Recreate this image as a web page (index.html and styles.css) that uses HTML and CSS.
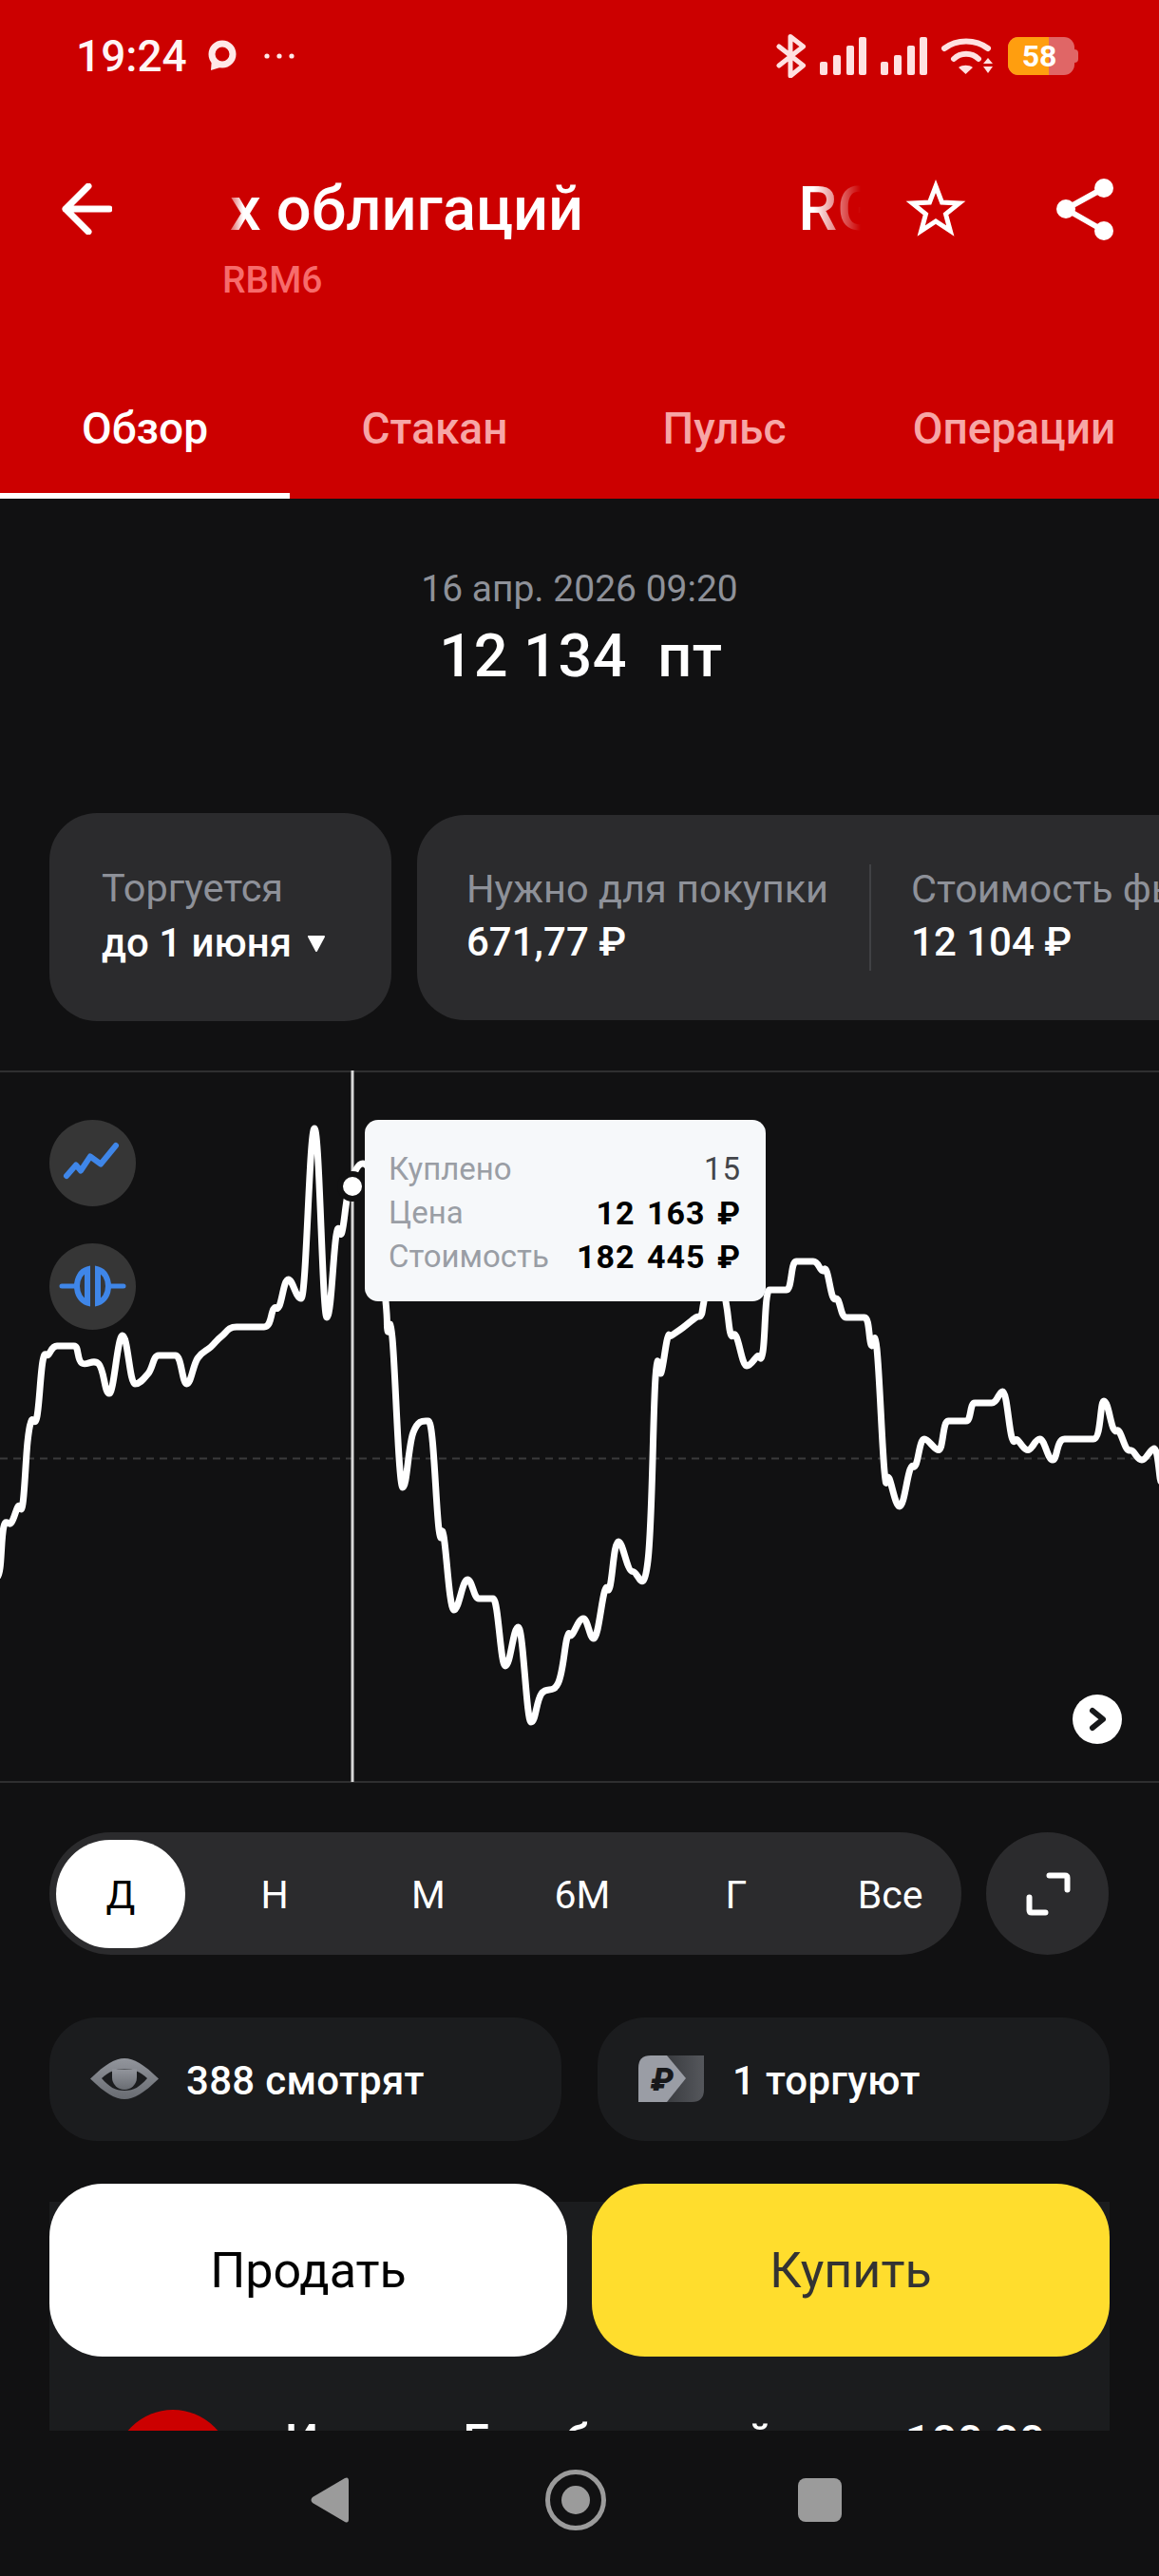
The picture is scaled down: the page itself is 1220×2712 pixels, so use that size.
FILE: index.html
```html
<!DOCTYPE html>
<html lang="ru">
<head>
<meta charset="utf-8">
<title>RBM6</title>
<link rel="stylesheet" href="styles.css">
</head>
<body>
<div class="page">
  <header class="header">
    <div class="status">
      <div class="status-left">
        <span class="time">19:24</span>
        <svg class="st-msg" width="34" height="36" viewBox="0 0 34 36"><circle cx="17" cy="16" r="11" fill="none" stroke="#ffe8e8" stroke-width="7"/><path d="M6 20 L5 33 L18 29 Z" fill="#ffe8e8"/></svg>
        <svg class="st-dots" width="34" height="8" viewBox="0 0 34 8"><circle cx="4" cy="4" r="2.6" fill="#ffe8e8"/><circle cx="17" cy="4" r="2.6" fill="#ffe8e8"/><circle cx="30" cy="4" r="2.6" fill="#ffe8e8"/></svg>
      </div>
      <div class="status-right">
        <svg width="31" height="46" viewBox="0 0 31 46"><path d="M3 13 L28.5 33 L15 44 V2.500 L28.500 13 L3 33" fill="none" stroke="#ffe1e1" stroke-width="5" stroke-linejoin="round" stroke-linecap="round"/></svg>
        <svg width="49" height="40" viewBox="0 0 49 40"><rect x="0" y="26" width="8" height="14" rx="2" fill="#ffe1e1"/><rect x="14" y="19" width="8" height="21" rx="2" fill="#ffe1e1"/><rect x="28" y="9" width="8" height="31" rx="2" fill="#ffe1e1"/><rect x="41" y="0" width="8" height="40" rx="2" fill="#ffe1e1"/></svg>
        <svg width="49" height="40" viewBox="0 0 49 40"><rect x="0" y="26" width="8" height="14" rx="2" fill="#ffe1e1"/><rect x="14" y="19" width="8" height="21" rx="2" fill="#ffe1e1"/><rect x="28" y="9" width="8" height="31" rx="2" fill="#ffe1e1"/><rect x="41" y="0" width="8" height="40" rx="2" fill="#ffe1e1"/></svg>
        <svg width="55" height="40" viewBox="0 0 55 40"><path d="M3 12 C16 2 36 2 49 12" fill="none" stroke="#ffe1e1" stroke-width="6" stroke-linecap="round"/><path d="M13 23 C20 16 32 16 39 23" fill="none" stroke="#ffe1e1" stroke-width="6" stroke-linecap="round"/><path d="M18 32 C22 29 29 29 33 32 L25.500 39 Z" fill="#ffe1e1"/><path d="M44 28 L49 22 L54 28 Z M44 31 H54 L49 38 Z" fill="#ffe1e1"/></svg>
        <div class="battery"><div class="battery-body"><div class="battery-fill"></div><span class="battery-num">58</span></div><div class="battery-nub"></div></div>
      </div>
    </div>
    <div class="titlebar">
      <div class="iconbox back"><svg width="54" height="54" viewBox="0 0 54 54"><path d="M51 27 H5 M29 3 L5 27 L29 51" fill="none" stroke="#fff" stroke-width="7" stroke-linecap="round" stroke-linejoin="round"/></svg></div>
      <div class="titles">
        <div class="marquee"><span>х облигаций</span><span>RGBI</span></div>
        <div class="ticker">RBM6</div>
      </div>
      <div class="iconbox star"><svg width="70" height="70" viewBox="0 0 70 70"><path d="M35 11 L41.500 28.100 L59.700 29 L45.500 40.400 L50.300 58 L35 48 L19.700 58 L24.500 40.400 L10.300 29 L28.500 28.100 Z" fill="none" stroke="#fff" stroke-width="5"/></svg></div>
      <div class="iconbox share"><svg width="64" height="70" viewBox="0 0 64 70"><path d="M52 13 L12 35 L52 58" fill="none" stroke="#fff" stroke-width="6"/><circle cx="52" cy="13" r="10" fill="#fff"/><circle cx="12" cy="35" r="10" fill="#fff"/><circle cx="52" cy="58" r="10" fill="#fff"/></svg></div>
    </div>
    <nav class="tabs">
      <div class="tab tab-active">Обзор</div>
      <div class="tab">Стакан</div>
      <div class="tab">Пульс</div>
      <div class="tab">Операции</div>
    </nav>
  </header>

  <main class="main">
    <section class="quote">
      <div class="quote-date">16 апр. 2026 09:20</div>
      <div class="quote-price">12 134 &nbsp;пт</div>
    </section>

    <section class="cards">
      <div class="card card-expiry">
        <div class="label">Торгуется</div>
        <div class="value">до 1 июня<svg class="caret" width="20" height="18" viewBox="0 0 20 18"><path d="M2 2 H18 L10 17 Z" fill="#fff" stroke="#fff" stroke-width="2" stroke-linejoin="round"/></svg></div>
      </div>
      <div class="card card-info">
        <div class="info-item">
          <div class="label">Нужно для покупки</div>
          <div class="value">671,77 ₽</div>
        </div>
        <div class="info-divider"></div>
        <div class="info-item">
          <div class="label">Стоимость фьючерса</div>
          <div class="value">12 104 ₽</div>
        </div>
      </div>
    </section>

    <section class="chart">
      <svg class="chart-svg" viewBox="0 1127 1220 750" width="1220" height="750">
        <line x1="0" y1="1535.500" x2="1220" y2="1535.500" stroke="#3a3a3b" stroke-width="2" stroke-dasharray="8 6"/>
        <line x1="371" y1="1127" x2="371" y2="1876" stroke="#d8d8d8" stroke-width="3"/>
        <path id="price-line" d="" fill="none" stroke="#fff" stroke-width="7" stroke-linejoin="round" stroke-linecap="round"/>
        <circle cx="371" cy="1249" r="13" fill="#fff" stroke="#111112" stroke-width="6"/>
      </svg>
      <div class="chart-tool chart-tool-line"><svg width="91" height="91" viewBox="0 0 91 91"><path d="M18 59 L28 47.500 L33 53.500 L43 38.500 L54 46.500 L70 27" fill="none" stroke="#3f86e8" stroke-width="6" stroke-linecap="round" stroke-linejoin="round"/></svg></div>
      <div class="chart-tool chart-tool-orders"><svg width="91" height="91" viewBox="0 0 91 91"><path d="M13 45 H27 M64 45 H78" stroke="#3f86e8" stroke-width="5" stroke-linecap="round"/><path d="M40 27.500 V62.500 C33 60.500 29 53 29 45 C29 37 33 29.500 40 27.500 Z M51 27.500 V62.500 C58 60.500 62 53 62 45 C62 37 58 29.500 51 27.500 Z" fill="none" stroke="#3f86e8" stroke-width="6"/></svg></div>
      <div class="tooltip">
        <div class="tt-row"><span class="tt-label">Куплено</span><span class="tt-count">15</span></div>
        <div class="tt-row"><span class="tt-label">Цена</span><span class="tt-value">12 163 ₽</span></div>
        <div class="tt-row"><span class="tt-label">Стоимость</span><span class="tt-value">182 445 ₽</span></div>
      </div>
      <div class="chart-next"><svg width="52" height="52" viewBox="0 0 52 52"><path d="M21 17 L32 26 L21 35" fill="none" stroke="#17181a" stroke-width="6" stroke-linecap="round" stroke-linejoin="round"/></svg></div>
    </section>

    <section class="range-row">
      <div class="periods">
        <div class="period period-active">Д</div>
        <div class="period">Н</div>
        <div class="period">М</div>
        <div class="period">6М</div>
        <div class="period">Г</div>
        <div class="period">Все</div>
      </div>
      <div class="expand"><svg width="52" height="52" viewBox="0 0 52 52"><path d="M27.500 6.500 H44 Q46.500 6.500 46.500 9 V21.500 M23.500 45.500 H9 Q6.500 45.500 6.500 43 V29.500" fill="none" stroke="#fff" stroke-width="6" stroke-linecap="round"/></svg></div>
    </section>

    <section class="chips">
      <div class="chip">
        <svg width="72" height="44" viewBox="0 0 72 44">
          <defs><linearGradient id="eye-g" x1="0" y1="0" x2="0" y2="1"><stop offset="0" stop-color="#92959c"/><stop offset="1" stop-color="#696c72"/></linearGradient></defs>
          <path d="M0 21.500 C16 6 26 0 36 0 C46 0 56 6 72 21.500 C56 37 46 43 36 43 C26 43 16 37 0 21.500 Z" fill="url(#eye-g)"/>
          <path d="M12 21 C20 14 26 11 36 11 C46 11 52 14 60 21 C52 30 46 34 36 34 C26 34 20 30 12 21 Z" fill="#1b1c1e"/>
          <path d="M23 11.500 H49 V20 A13 13 0 0 1 23 20 Z" fill="url(#eye-g)"/>
        </svg>
        <span class="chip-text">388 смотрят</span>
      </div>
      <div class="chip">
        <svg width="70" height="50" viewBox="0 0 70 50">
          <defs><linearGradient id="rub-g" x1="0" y1="0" x2="1" y2="0"><stop offset="0" stop-color="#3a3c40"/><stop offset="1" stop-color="#55575c"/></linearGradient></defs>
          <path d="M30 0 H69 V36 Q69 49 56 49 H30 Z" fill="url(#rub-g)"/>
          <path d="M13 0 H30 L50 24 L30 49 H0 V13 Q0 0 13 0 Z" fill="#9a9da5"/>
          <text class="rub-mark" x="25" y="37" text-anchor="middle">₽</text>
        </svg>
        <span class="chip-text">1 торгуют</span>
      </div>
    </section>

    <section class="holding">
      <div class="holding-logo"></div>
      <div class="holding-name">Индекс Гособлигаций</div>
      <div class="holding-price">100,00</div>
    </section>

    <div class="actions">
      <button class="action action-sell">Продать</button>
      <button class="action action-buy">Купить</button>
    </div>
  </main>

  <footer class="navbar">
    <svg width="44" height="54" viewBox="0 0 44 54"><path d="M38 4 Q42 2 42 7 V47 Q42 52 38 50 L4 30 Q1 27 4 24 Z" fill="#9b9b9b"/></svg>
    <svg class="nav-home" width="64" height="64" viewBox="0 0 64 64"><circle cx="32" cy="32" r="29.500" fill="none" stroke="#9b9b9b" stroke-width="5"/><circle cx="32" cy="32" r="15" fill="#9b9b9b"/></svg>
    <div class="nav-square"></div>
  </footer>
</div>
<script src="chart.js"></script>
</body>
</html>
```

FILE: styles.css
```css
* { box-sizing: border-box; }
html, body { margin: 0; padding: 0; background: #111112; }
body { font-family: Roboto, "Noto Sans", "DejaVu Sans", sans-serif; color: #fff; }
.page { width: 1220px; height: 2712px; display: flex; flex-direction: column; overflow: hidden; background: #111112; }

.header { height: 525px; background: #cc0000; display: flex; flex-direction: column; flex: none; }
.status { height: 58px; margin-top: 30px; padding: 0 85px 0 80px; display: flex; justify-content: space-between; align-items: center; }
.status-left { display: flex; align-items: center; }
.time { font-size: 46px; font-weight: 500; line-height: 58px; color: #fff5f5; }
.st-msg { margin-left: 20px; }
.st-dots { margin-left: 26px; }
.status-right { display: flex; align-items: center; gap: 15px; }
.battery { display: flex; align-items: center; }
.battery-body { position: relative; width: 70px; height: 40px; border-radius: 11px; background: #e06666; overflow: hidden; display: flex; align-items: center; justify-content: center; }
.battery-fill { position: absolute; left: 0; top: 0; bottom: 0; width: 43px; background: #ff9e0f; }
.battery-num { position: relative; font-size: 32px; font-weight: 700; color: #fff; line-height: 40px; margin-left: -4px; }
.battery-nub { width: 4px; height: 14px; border-radius: 0 4px 4px 0; background: #e06666; }

.titlebar { height: 133px; margin-top: 96px; display: flex; align-items: flex-start; flex: none; }
.iconbox { height: 72px; display: flex; align-items: center; flex: none; }
.back { margin-left: 64px; width: 54px; }
.titles { margin-left: 116px; width: 672px; flex: none; }
.marquee { height: 72px; display: flex; gap: 226px; white-space: nowrap; overflow: hidden; font-size: 65px; font-weight: 500; line-height: 72px; padding-left: 8px; -webkit-mask-image: linear-gradient(90deg, transparent 0, #000 22px, #000 calc(100% - 50px), transparent 100%); mask-image: linear-gradient(90deg, transparent 0, #000 22px, #000 calc(100% - 50px), transparent 100%); }
.marquee span { flex: none; }
.ticker { margin-top: 17px; font-size: 39px; line-height: 44px; font-weight: 500; color: #f76b6b; }
.star { margin-left: 44px; width: 70px; }
.share { margin-left: 90px; width: 64px; }

.tabs { margin-top: auto; display: flex; }
.tab { flex: 1; height: 142px; display: flex; align-items: center; justify-content: center; font-size: 46px; font-weight: 500; color: #f7a6a6; border-bottom: 6px solid transparent; }
.tab-active { color: #fff; border-bottom-color: #fff; }

.main { position: relative; height: 2034px; flex: none; overflow: hidden; }
.quote { padding-top: 70px; text-align: center; }
.quote-date { font-size: 39px; line-height: 50px; color: #8e9199; }
.quote-price { margin-top: 10px; padding-left: 3px; font-size: 63px; font-weight: 500; line-height: 72px; letter-spacing: 0.5px; }

.cards { margin-top: 129px; padding-left: 52px; display: flex; align-items: center; gap: 27px; height: 219px; overflow: hidden; }
.card { background: #2b2b2d; border-radius: 50px; flex: none; display: flex; }
.card-expiry { width: 360px; height: 219px; padding: 0 0 3px 55px; flex-direction: column; justify-content: center; gap: 8px; }
.card-info { height: 216px; padding: 0 0 0 52px; align-items: center; }
.label { font-size: 41.5px; line-height: 50px; color: #8e9199; white-space: nowrap; }
.value { font-size: 42px; line-height: 50px; font-weight: 500; color: #fff; white-space: nowrap; display: flex; align-items: center; }
.caret { margin-left: 16px; }
.info-item { display: flex; flex-direction: column; gap: 6px; padding-bottom: 3px; }
.info-divider { width: 2px; height: 112px; background: #404144; margin: 0 42px 0 43px; }

.chart { position: relative; margin-top: 52px; height: 750px; border-top: 2px solid #2f2f30; border-bottom: 2px solid #2f2f30; }
.chart-svg { position: absolute; left: 0; top: -2px; display: block; }
.chart-tool { position: absolute; left: 52px; width: 91px; height: 91px; border-radius: 50%; background: #363636; }
.chart-tool svg { display: block; }
.chart-tool-line { top: 50px; }
.chart-tool-orders { top: 180px; }
.tooltip { position: absolute; left: 384px; top: 50px; width: 422px; height: 191px; border-radius: 14px; background: #f6f8fa; padding: 4px 26px 0 25px; display: flex; flex-direction: column; justify-content: center; }
.tt-row { display: flex; justify-content: space-between; line-height: 46px; font-size: 33px; white-space: nowrap; }
.tt-label { color: #9a9ea5; }
.tt-count { color: #44464a; letter-spacing: 1px; }
.tt-value { color: #000; font-weight: 700; font-size: 34px; letter-spacing: 1px; word-spacing: 3px; }
.chart-next { position: absolute; left: 1129px; top: 655px; width: 52px; height: 52px; border-radius: 50%; background: #fff; }
.chart-next svg { display: block; }

.range-row { margin-top: 52px; padding: 0 53px 0 52px; display: flex; gap: 26px; }
.periods { width: 960px; height: 129px; padding: 8px 7px; border-radius: 65px; background: #2b2b2d; display: flex; gap: 26px; }
.period { width: 136px; height: 114px; border-radius: 57px; display: flex; align-items: center; justify-content: center; font-size: 41px; padding-top: 2px; color: #fff; }
.period-active { background: #fff; color: #000; }
.expand { width: 129px; height: 129px; border-radius: 50%; background: #2b2b2d; display: flex; align-items: center; justify-content: center; }

.chips { margin-top: 66px; padding: 0 52px; display: flex; gap: 38px; }
.chip { flex: 1; height: 130px; border-radius: 50px; background: #1b1c1e; padding-left: 43px; display: flex; align-items: center; gap: 29px; }
.chip-text { font-size: 42px; font-weight: 500; line-height: 50px; color: #fff; letter-spacing: 0.3px; padding-top: 4px; }
.rub-mark { font-size: 34px; font-weight: 900; fill: #17181a; font-style: italic; }

.holding { margin: 64px 52px 0; height: 400px; background: #1b1c1e; padding: 217px 68px 0 68px; display: flex; align-items: flex-start; }
.holding-logo { width: 124px; height: 124px; border-radius: 50%; background: #cc0000; margin-top: 2px; flex: none; }
.holding-name { margin-left: 56px; font-size: 50px; font-weight: 500; line-height: 72px; white-space: nowrap; flex: 1; }
.holding-price { font-size: 48px; font-weight: 500; line-height: 72px; }

.actions { position: absolute; left: 52px; right: 52px; bottom: 78px; display: flex; gap: 26px; }
.action { flex: 1; height: 182px; border: 0; border-radius: 56px; font-family: inherit; font-size: 52px; }
.action-sell { background: #fff; color: #000; }
.action-buy { background: #ffdd2d; color: #333; }

.navbar { height: 153px; flex: none; background: #111112; padding: 0 0 8px 325px; display: flex; align-items: center; }
.nav-home { margin-left: 205px; }
.nav-square { margin-left: 202px; width: 46px; height: 46px; border-radius: 8px; background: #9b9b9b; }
```

FILE: chart.js
```js
var pts = [[-4,1660],[0,1651],[4,1607],[12,1603],[19,1586],[24,1583],[29,1518],[33,1496],[39,1491],[45,1433],[51,1426],[60,1417],[78,1417],[86,1435],[104,1436],[115,1467],[129,1406],[142,1457],[156,1446],[167,1427],[185,1427],[196.5,1457],[208,1430],[222,1418],[233,1407],[249,1397],[278,1397],[288,1378],[294,1375],[303.5,1347],[317,1367],[331,1188],[344,1387],[354,1300],[360,1297],[368,1249],[382,1225],[395,1260],[406,1370],[408,1401],[413,1409],[424,1566],[435,1508],[451,1496],[462,1610],[467,1617],[478,1695],[492,1663],[504,1683],[519,1683],[532,1754],[545.5,1713],[559,1813],[570,1783],[587.5,1772],[597,1724],[602,1721],[614,1704],[625,1725],[636.5,1675],[642,1670.5],[651,1623],[666,1654.5],[682,1643],[690,1450],[696,1445],[702.6,1409],[707,1406],[719,1397.6],[732.5,1387],[738,1384.5],[741,1370],[752,1310],[764,1370],[769,1404],[775,1407],[786,1438],[797,1428],[803,1423],[810,1358],[828,1358],[838,1328],[856,1328],[865,1337.5],[870,1338],[876.5,1365],[882,1368.5],[891,1387],[910,1387],[917,1416],[923,1420],[931,1549],[936,1556.5],[947,1586],[958,1547],[964,1542],[973,1515],[988,1526.5],[998,1496],[1017,1496],[1026,1477],[1044,1477],[1055.5,1465],[1065,1513],[1071,1516],[1082,1526.5],[1094.5,1515],[1108,1537],[1120.5,1515],[1151,1515],[1162,1475],[1172,1504],[1178,1507],[1186,1525],[1192,1527.5],[1202,1537],[1215,1525],[1222,1560]];

function slope(a, b, c) {
  var t = [(c[0] - a[0]) * 0.2, (c[1] - a[1]) * 0.2];
  if ((b[1] - a[1]) * (c[1] - b[1]) <= 0) t[1] = 0;
  return t;
}

var d = 'M' + pts[0][0] + ' ' + pts[0][1];
for (var i = 0; i < pts.length - 1; i++) {
  var p0 = pts[Math.max(i - 1, 0)], p1 = pts[i], p2 = pts[i + 1], p3 = pts[Math.min(i + 2, pts.length - 1)];
  var t1 = slope(p0, p1, p2), t2 = slope(p1, p2, p3);
  d += ' C' + (p1[0] + t1[0]).toFixed(1) + ' ' + (p1[1] + t1[1]).toFixed(1) + ' ' +
       (p2[0] - t2[0]).toFixed(1) + ' ' + (p2[1] - t2[1]).toFixed(1) + ' ' + p2[0] + ' ' + p2[1];
}
document.getElementById('price-line').setAttribute('d', d);
```
